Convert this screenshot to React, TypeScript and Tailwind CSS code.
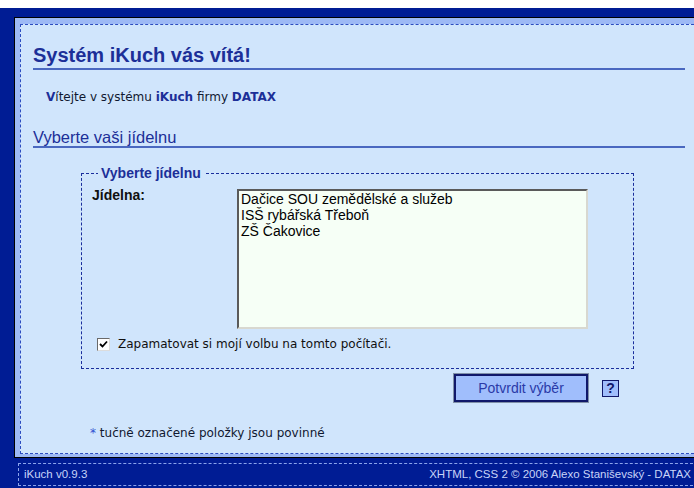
import React from 'react';

const canteens = ['Dačice SOU zemědělské a služeb', 'ISŠ rybářská Třeboň', 'ZŠ Čakovice'];

const CheckMark: React.FC = () => (
  <span className="flex h-[13px] w-[13px] items-center justify-center border border-t-[#6a6a6a] border-l-[#6a6a6a] border-b-[#dcdcdc] border-r-[#dcdcdc] bg-white">
    <svg width="9" height="9" viewBox="0 0 9 9">
      <path d="M1 4 L3.5 6.5 L8 1.5" stroke="#000" strokeWidth="1.8" fill="none" />
    </svg>
  </span>
);

export default function App() {
  return (
    <div className="h-[488px] w-[694px] overflow-hidden bg-white pt-2 [font-family:'Liberation_Sans',Arial,sans-serif]">
      <div className="h-[480px] bg-[#001c94] pt-[9px]">
        {/* main frame */}
        <div className="ml-[14px] w-[690px] border border-r-0 border-black bg-[#9db9f5] pl-[5px] pt-[6px] pb-[3px]">
          <div className="h-[430px] border border-dashed border-[#2c4cc0] bg-[#d0e5fc] pl-[12px] pr-[18px]">
            <h1 className="mt-[18px] border-b-2 border-[#4a68c0] pb-[1px] text-[20px] leading-[24px] font-bold text-[#1c2f98]">
              Systém iKuch vás vítá!
            </h1>
            <p className="mt-[19px] ml-[13px] text-[12px] leading-[16px] text-[#101830] [font-family:'DejaVu_Sans',Verdana,sans-serif]">
              <b className="text-[#1c2f98]">V</b>ítejte v systému <b className="text-[#1c2f98]">iKuch</b> firmy{' '}
              <b className="text-[#1c2f98]">DATAX</b>
            </p>
            <h2 className="mt-[23px] border-b-2 border-[#4a68c0] text-[16.5px] leading-[18px] text-[#1c2f98]">
              Vyberte vaši jídelnu
            </h2>

            <fieldset className="mt-[17px] ml-[48px] w-[553px] border border-dashed border-[#1a2e9c] px-[10px] pt-[8px] pb-[17px]">
              <legend className="ml-[6px] px-[3px] text-[14px] leading-[16px] font-bold text-[#1c2f98]">Vyberte jídelnu</legend>
              <div className="flex items-start">
                <label className="w-[145px] text-[14px] leading-[13px] font-bold text-[#101010]">Jídelna:</label>
                <div className="h-[140px] w-[351px] border-2 border-t-[#5a5a5a] border-l-[#5a5a5a] border-b-[#d8d8d0] border-r-[#d8d8d0] bg-[#f6fff6] pl-[2px]">
                  {canteens.map((name) => (
                    <div key={name} className="text-[14px] leading-[16px] text-black">
                      {name}
                    </div>
                  ))}
                </div>
              </div>
              <div className="mt-[9px] ml-[5px] flex items-center gap-[8px] text-[12px] leading-[13px] text-[#101010] [font-family:'DejaVu_Sans',Verdana,sans-serif]">
                <CheckMark />
                <span>Zapamatovat si mojí volbu na tomto počítači.</span>
              </div>
            </fieldset>

            <div className="mt-[5px] ml-[48px] flex w-[553px] items-center justify-end gap-[14px] pr-[15px]">
              <button className="h-[28px] w-[134px] border-2 border-[#10186a] bg-[#a0befc] text-[14px] text-[#2a3aa8] outline outline-1 outline-[#8090a8]">
                Potvrdit výběr
              </button>
              <span className="flex h-[17px] w-[17px] items-center justify-center border border-[#10186a] bg-[#a0befc] text-[14px] leading-none font-bold text-[#10186a]">
                ?
              </span>
            </div>

            <p className="mt-[23px] ml-[57px] text-[12px] leading-[16px] text-[#101830] [font-family:'DejaVu_Sans',Verdana,sans-serif]">
              <span className="text-[#3050d0]">*</span> tučně označené položky jsou povinné
            </p>
          </div>
        </div>

        <footer className="mt-[5px] ml-[18px] flex h-[23px] w-[680px] items-center justify-between border border-dashed border-[#8ca4ec] pl-[5px] pr-[6px] text-[11.5px] text-[#c8d4f8]">
          <span>iKuch v0.9.3</span>
          <span>XHTML, CSS 2 © 2006 Alexo Staniševský - DATAX</span>
        </footer>
      </div>
    </div>
  );
}
